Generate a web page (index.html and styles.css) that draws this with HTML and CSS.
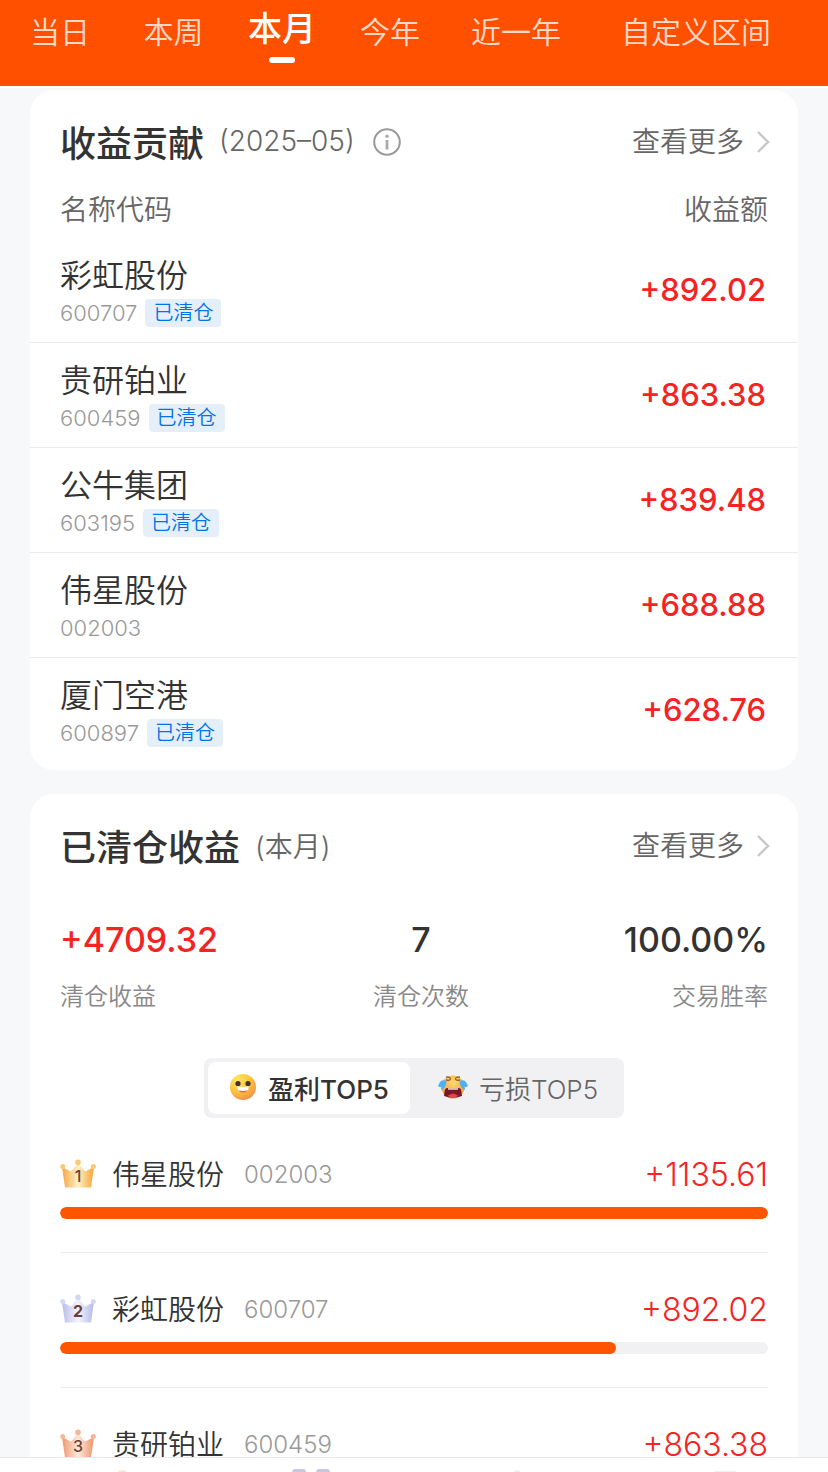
FILE: index.html
```html
<!DOCTYPE html>
<html lang="zh-CN">
<head>
<meta charset="utf-8">
<meta name="viewport" content="width=device-width, initial-scale=1">
<title>收益分析</title>
<link rel="stylesheet" href="styles.css">
</head>
<body>
<svg class="defs" width="0" height="0" aria-hidden="true">
  <defs>
    <linearGradient id="gold" gradientUnits="userSpaceOnUse" x1="3" y1="0" x2="33" y2="0"><stop offset="0" stop-color="#f7ab4e"/><stop offset=".5" stop-color="#fff0c4"/><stop offset="1" stop-color="#f7a93f"/></linearGradient>
    <linearGradient id="silver" gradientUnits="userSpaceOnUse" x1="3" y1="0" x2="33" y2="0"><stop offset="0" stop-color="#bcc0ea"/><stop offset=".5" stop-color="#f3f4fd"/><stop offset="1" stop-color="#b9bee8"/></linearGradient>
    <linearGradient id="bronze" gradientUnits="userSpaceOnUse" x1="3" y1="0" x2="33" y2="0"><stop offset="0" stop-color="#ef9b74"/><stop offset=".5" stop-color="#ffe9dc"/><stop offset="1" stop-color="#ee9a72"/></linearGradient>
    <radialGradient id="smile" cx=".3" cy=".2" r=".9"><stop offset="0" stop-color="#ffe65a"/><stop offset=".55" stop-color="#fcc140"/><stop offset="1" stop-color="#f58a4a"/></radialGradient>
    <radialGradient id="cry" cx=".5" cy=".3" r=".7"><stop offset="0" stop-color="#ffd970"/><stop offset="1" stop-color="#f19a3c"/></radialGradient>
    <path id="crown" d="M2 8 11 12.500 18 4l7 8.500L34 8l-3 20.500H5z"/>
    <g id="crown-tips"><circle cx="2.700" cy="7.500" r="2.500"/><circle cx="18" cy="3.200" r="2.800"/><circle cx="33.300" cy="7.500" r="2.500"/></g>
    <path id="chevron" d="M2 2l10 10L2 22" fill="none" stroke="#c8c8c8" stroke-width="2.400"/>
  </defs>
</svg>

<div class="page">
  <nav class="periods" aria-label="统计周期">
    <button class="period">当日</button>
    <button class="period">本周</button>
    <button class="period period-active" aria-current="true">本月</button>
    <button class="period">今年</button>
    <button class="period">近一年</button>
    <button class="period">自定义区间</button>
  </nav>

  <main class="content">
    <section class="card">
      <header class="card-header">
        <h2 class="card-title">收益贡献</h2>
        <span class="card-note">(2025–05)</span>
        <button class="info" aria-label="说明">
          <svg width="28" height="28" viewBox="0 0 28 28"><circle cx="14" cy="14" r="12.800" fill="none" stroke="#999" stroke-width="2"/><circle cx="14" cy="8.200" r="1.700" fill="#aaa"/><path d="M14 12v9.500" stroke="#aaa" stroke-width="2.800"/></svg>
        </button>
        <a class="more" href="#">查看更多<svg width="14" height="24" viewBox="0 0 14 24"><use href="#chevron"/></svg></a>
      </header>
      <table class="holdings">
        <thead>
          <tr><th scope="col">名称代码</th><th scope="col">收益额</th></tr>
        </thead>
        <tbody>
          <tr><td><div class="name">彩虹股份</div><div class="sub"><span>600707</span><span class="tag">已清仓</span></div></td><td class="gain">+892.02</td></tr>
          <tr><td><div class="name">贵研铂业</div><div class="sub"><span>600459</span><span class="tag">已清仓</span></div></td><td class="gain">+863.38</td></tr>
          <tr><td><div class="name">公牛集团</div><div class="sub"><span>603195</span><span class="tag">已清仓</span></div></td><td class="gain">+839.48</td></tr>
          <tr><td><div class="name">伟星股份</div><div class="sub"><span>002003</span></div></td><td class="gain">+688.88</td></tr>
          <tr><td><div class="name">厦门空港</div><div class="sub"><span>600897</span><span class="tag">已清仓</span></div></td><td class="gain">+628.76</td></tr>
        </tbody>
      </table>
    </section>

    <section class="card">
      <header class="card-header">
        <h2 class="card-title">已清仓收益</h2>
        <span class="card-note">(本月)</span>
        <a class="more" href="#">查看更多<svg width="14" height="24" viewBox="0 0 14 24"><use href="#chevron"/></svg></a>
      </header>
      <div class="stats">
        <div class="stat"><strong class="stat-value up">+4709.32</strong><span class="stat-label">清仓收益</span></div>
        <div class="stat stat-center"><strong class="stat-value">7</strong><span class="stat-label">清仓次数</span></div>
        <div class="stat stat-end"><strong class="stat-value">100.00%</strong><span class="stat-label">交易胜率</span></div>
      </div>
      <div class="segment">
        <button class="segment-item segment-active" aria-pressed="true">
          <svg width="28" height="28" viewBox="0 0 28 28"><circle cx="14" cy="14" r="13" fill="url(#smile)"/><circle cx="9" cy="10.500" r="2.600" fill="#43302f"/><circle cx="19" cy="10.500" r="2.600" fill="#43302f"/><path d="M9 13.500q5 1 10 0 0 6-5 6t-5-6z" fill="#ee6a4c"/><path d="M8.500 13.200q5.500 1.300 11 0 .3 3.800-1.500 4.300-4 .8-8 0-1.800-.5-1.500-4.300z" fill="#fff"/></svg>
          盈利TOP5
        </button>
        <button class="segment-item segment-loss" aria-pressed="false">
          <svg width="30" height="26" viewBox="0 0 30 26"><circle cx="15" cy="13" r="11.500" fill="url(#cry)"/><path d="M8 3q5 0 4.500 2T8 6M22 3q-5 0-4.500 2T22 6" fill="none" stroke="#8a6250" stroke-width="1.300"/><path d="M9.500 14h11q2.500 0 2.800 3l.7 5q-9 3-18 0l.7-5q.3-3 2.800-3z" fill="#7a1628"/><path d="M10 14.200h10v1.500H10z" fill="#f8e2d4"/><path d="M9.500 22q5.500-5 11 0-5.500 2.500-11 0z" fill="#e2404f"/><path d="M8.500 7Q4 5 2 8L0 12q2 2 4 .5-2 3 0 3.500 4-3 4.500-9zM21.500 7q4.500-2 6.500 1l2 4q-2 2-4 .5 2 3 0 3.500-4-3-4.500-9z" fill="#4db0f4"/></svg>
          亏损TOP5
        </button>
      </div>
      <ol class="ranking">
        <li class="rank">
          <div class="rank-head">
            <svg width="36" height="30" viewBox="0 0 36 30" role="img" aria-label="第1名"><use href="#crown" fill="url(#gold)"/><use href="#crown-tips" fill="#f9c878"/><text class="rank-number" x="18" y="23">1</text></svg>
            <span class="rank-name">伟星股份</span><span class="rank-code">002003</span><span class="rank-gain">+1135.61</span>
          </div>
          <div class="bar"><div class="bar-fill" style="width:100%"></div></div>
        </li>
        <li class="rank">
          <div class="rank-head">
            <svg width="36" height="30" viewBox="0 0 36 30" role="img" aria-label="第2名"><use href="#crown" fill="url(#silver)"/><use href="#crown-tips" fill="#d3d6f2"/><text class="rank-number rank-number-bold" x="18" y="23">2</text></svg>
            <span class="rank-name">彩虹股份</span><span class="rank-code">600707</span><span class="rank-gain">+892.02</span>
          </div>
          <div class="bar"><div class="bar-fill" style="width:78.5%"></div></div>
        </li>
        <li class="rank">
          <div class="rank-head">
            <svg width="36" height="30" viewBox="0 0 36 30" role="img" aria-label="第3名"><use href="#crown" fill="url(#bronze)"/><use href="#crown-tips" fill="#f4b79c"/><text class="rank-number" x="18" y="23">3</text></svg>
            <span class="rank-name">贵研铂业</span><span class="rank-code">600459</span><span class="rank-gain">+863.38</span>
          </div>
          <div class="bar"><div class="bar-fill" style="width:76%"></div></div>
        </li>
      </ol>
    </section>
  </main>

  <footer class="dock">
    <svg width="48" height="3" viewBox="0 0 48 3"><path d="M38 3q4-4 9 0z" fill="#ffe3cc"/></svg>
    <svg width="48" height="3" viewBox="0 0 48 3"><path d="M5 3q0-3 3-3h8q3 0 3 3zM29 3q0-3 3-3h8q3 0 3 3z" fill="#cbc7df"/></svg>
    <svg width="48" height="3" viewBox="0 0 48 3"><path d="M19 3q4-4 8 0z" fill="#eeeef2"/></svg>
    <svg width="48" height="3" viewBox="0 0 48 3"><path d="M13 2h22v1H13z" fill="#f1f1f4"/></svg>
  </footer>
</div>
</body>
</html>
```
FILE: styles.css
```css
* { box-sizing: border-box; }

body {
  margin: 0;
  background: #f7f8fa;
  color: #333;
  font-family: Inter, "Noto Sans CJK SC", sans-serif;
  font-weight: 350;
}

button {
  margin: 0;
  padding: 0;
  border: 0;
  background: none;
  color: inherit;
  font: inherit;
}

svg { display: block; flex: none; }
.defs { position: absolute; }

.page {
  display: flex;
  flex-direction: column;
  height: 100vh;
}

.periods {
  display: grid;
  grid-template-columns: 120fr 107fr 110fr 106fr 146fr 214fr;
  flex: none;
  padding: 6px 25px 23px 0;
  background: #ff5000;
}

.period {
  display: flex;
  flex-direction: column;
  align-items: center;
  padding-top: 6px;
  height: 57px;
  color: rgba(255, 255, 255, .8);
  font-size: 30px;
  line-height: 40px;
  white-space: nowrap;
}

.period-active {
  justify-content: space-between;
  padding-top: 3px;
  color: #fff;
  font-size: 34px;
  font-weight: 500;
}

.period-active::after {
  width: 26px;
  height: 6px;
  border-radius: 3px;
  background: #fff;
  content: "";
}

.content {
  display: flex;
  flex: 1;
  flex-direction: column;
  gap: 24px;
  min-height: 0;
  overflow: hidden;
  border-top: 2px solid #fff;
  padding: 2px 30px 0;
}

.card {
  flex: none;
  border-radius: 24px;
  background: #fff;
}

.card-header {
  display: flex;
  align-items: center;
  height: 104px;
  padding: 0 28px 0 30px;
}

.card-title {
  margin: 0;
  padding-bottom: 2px;
  font-size: 36px;
  font-weight: 500;
}

.card-note {
  margin: 0 18px 0 15px;
  padding-bottom: 2px;
  color: #666;
  font-size: 28px;
}

.more {
  display: flex;
  align-items: center;
  gap: 12px;
  margin-left: auto;
  color: #666;
  font-size: 28px;
  line-height: 36px;
  text-decoration: none;
}

.holdings {
  width: 100%;
  border-spacing: 0;
  padding-bottom: 8px;
}

.holdings th {
  padding: 1px 30px 13px;
  color: #666;
  font-size: 28px;
  font-weight: inherit;
  line-height: 30px;
  text-align: left;
}

.holdings th:last-child { text-align: right; }

.holdings td {
  border-bottom: 1px solid #ebebeb;
  padding: 18px 30px 15px;
}

.holdings tr:last-child td { border-bottom: 0; }

.name {
  font-size: 32px;
  line-height: 40px;
}

.sub {
  display: flex;
  align-items: center;
  gap: 8px;
  height: 28px;
  margin-top: 3px;
  color: #999;
  font-size: 22px;
}

.tag {
  border-radius: 4px;
  padding: 0 8px;
  background: #e5effa;
  color: #0073e6;
  font-size: 20px;
  line-height: 28px;
}

.holdings .gain {
  padding: 16px 32px 16px 0;
  color: #f42424;
  font-size: 31px;
  font-weight: 500;
  line-height: 40px;
  text-align: right;
}

.stats {
  display: flex;
  justify-content: space-between;
  padding: 22px 30px 44px;
}

.stat {
  display: flex;
  flex-direction: column;
  gap: 20px;
}

.stat-center { align-items: center; }
.stat-end { align-items: flex-end; }

.stat-value {
  font-size: 34px;
  font-weight: 500;
  line-height: 40px;
}

.up { color: #f42424; }

.stat-label {
  color: #888;
  font-size: 24px;
  line-height: 34px;
}

.segment {
  display: grid;
  grid-template-columns: 202fr 210fr;
  width: 420px;
  max-width: 100%;
  height: 60px;
  margin: 0 auto;
  border-radius: 8px;
  padding: 4px;
  background: #f1f1f4;
}

.segment-item {
  display: flex;
  align-items: center;
  justify-content: center;
  gap: 11px;
  border-radius: 8px;
  padding-bottom: 2px;
  color: #666;
  font-size: 26px;
}

.segment-loss { padding-left: 6px; }

.segment-active {
  background: #fff;
  color: #333;
  font-weight: 500;
}

.ranking {
  margin: 0;
  padding: 0 30px;
  list-style: none;
}

.rank {
  border-bottom: 1px solid #ebebeb;
  padding: 36px 0 33px;
}

.rank-head {
  display: flex;
  align-items: center;
  height: 40px;
  margin-bottom: 13px;
}

.rank-number {
  fill: #6b4038;
  font-size: 16px;
  font-weight: 500;
  text-anchor: middle;
}

.rank-number-bold { font-weight: 700; }

.rank-name {
  margin: 0 20px 0 16px;
  padding-bottom: 2px;
  font-size: 28px;
}

.rank-code {
  color: #999;
  font-size: 24px;
}

.rank-gain {
  margin-left: auto;
  color: #f42424;
  font-size: 32px;
}

.bar {
  overflow: hidden;
  border-radius: 6px;
  background: #f1f1f4;
}

.bar-fill {
  height: 12px;
  border-radius: 6px;
  background: #ff5500;
}

.dock {
  display: grid;
  grid-template-columns: repeat(4, 1fr);
  flex: none;
  align-items: end;
  justify-items: center;
  height: 15px;
  border-top: 1px solid #e8e8e8;
  background: #fff;
}
```
